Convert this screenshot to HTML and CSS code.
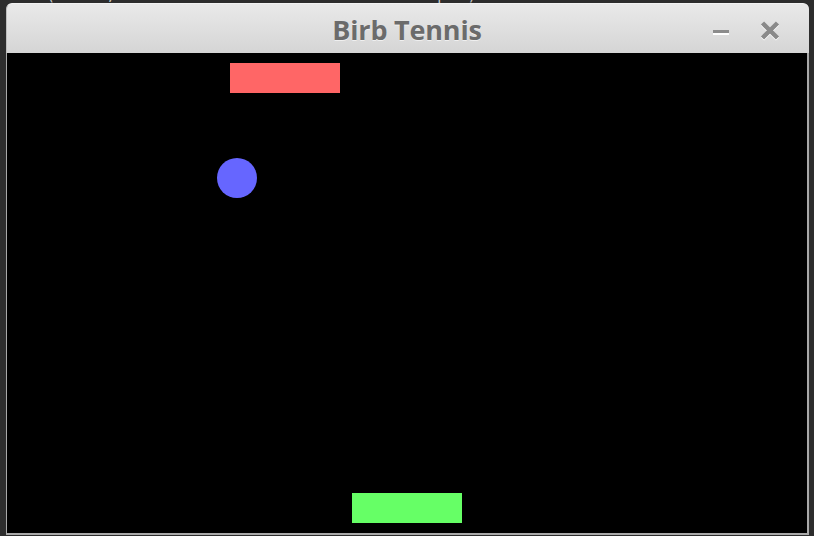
FILE: index.html
```html
<!DOCTYPE html>
<html lang="en">
<head>
    <meta charset="UTF-8">
    <meta name="viewport" content="width=device-width, initial-scale=1.0">
    <title>Birb Tennis</title>
    <link rel="stylesheet" href="styles.css">
</head>
<body>
    <div class="desktop-text">
        <span>ase (Event, a_rollard due to ho concrete Empac)</span>
    </div>

    <div class="window">
        <header class="titlebar">
            <span class="title">Birb Tennis</span>
            <div class="controls">
                <button class="ctrl minimize" aria-label="Minimize">
                    <svg width="16" height="10" viewBox="0 0 16 10">
                        <rect x="0" y="3" width="16" height="4" fill="#ffffff"/>
                        <rect x="0" y="2" width="16" height="3" fill="#8c8c8c"/>
                    </svg>
                </button>
                <button class="ctrl close" aria-label="Close">
                    <svg width="20" height="24" viewBox="0 0 20 24">
                        <path d="M2.5 4 L17.5 19 M17.5 4 L2.5 19" stroke="#ffffff" stroke-width="4.5" transform="translate(0 1)"/>
                        <path d="M2.5 4 L17.5 19 M17.5 4 L2.5 19" stroke="#8a8a8a" stroke-width="4.5"/>
                    </svg>
                </button>
            </div>
        </header>

        <main class="court">
            <svg class="field" width="800" height="480" viewBox="0 0 800 480">
                <rect width="800" height="480" fill="#000000"/>
                <rect x="223" y="10" width="110" height="30" fill="#ff6666"/>
                <circle cx="230" cy="125" r="20" fill="#6666ff"/>
                <rect x="345" y="440" width="110" height="30" fill="#66ff66"/>
            </svg>
        </main>
    </div>
</body>
</html>
```

FILE: styles.css
```css
* {
    margin: 0;
    padding: 0;
    box-sizing: border-box;
}

body {
    background-color: #2d2d2d;
    width: 814px;
    height: 536px;
    overflow: hidden;
    font-family: 'Open Sans', sans-serif;
}

.desktop-text {
    height: 3px;
    overflow: hidden;
    padding-left: 6px;
    font-family: 'DejaVu Sans Mono', monospace;
    font-size: 15px;
    color: #c8c8c8;
}

.desktop-text span {
    display: block;
    margin-top: -13px;
    line-height: 16px;
    letter-spacing: 1px;
}

.window {
    margin-left: 6px;
    width: 803px;
    border-radius: 6px 6px 0 0;
    overflow: hidden;
    background-color: #a9a9a9;
}

.titlebar {
    height: 50px;
    display: flex;
    align-items: center;
    justify-content: center;
    position: relative;
    background: linear-gradient(#e9e9e9, #d5d5d5);
    border-left: 1px solid #bdbdbd;
    border-top: 1px solid #f2f2f2;
    border-radius: 6px 6px 0 0;
}

.title {
    font-weight: bold;
    font-size: 27px;
    color: #6b6b6b;
    letter-spacing: -0.2px;
    text-shadow: 0 1px 0 rgba(255, 255, 255, 0.6);
    margin-top: 2px;
    margin-left: -2px;
}

.controls {
    position: absolute;
    right: 29px;
    top: 0;
    height: 100%;
    display: flex;
    align-items: center;
    gap: 31px;
}

.ctrl {
    background: transparent;
    border: none;
    display: flex;
    align-items: center;
}

.minimize {
    margin-top: 8px;
}

.close {
    margin-top: 4px;
}

.court {
    display: flex;
    padding: 0 2px 2px 1px;
    background-color: #a9a9a9;
}

.field {
    display: block;
}
```
